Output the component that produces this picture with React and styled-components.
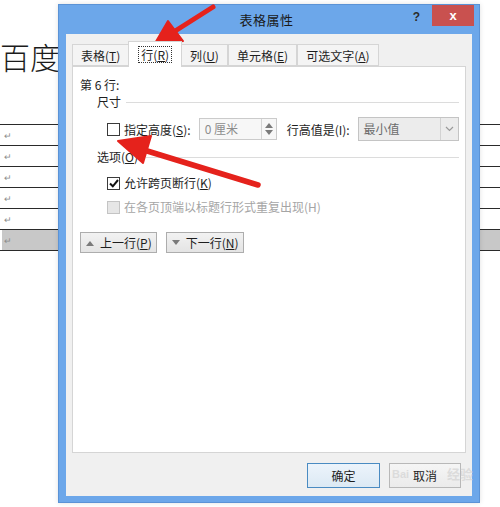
import React from 'react'
import styled, { createGlobalStyle } from 'styled-components'

const GlobalStyle = createGlobalStyle`
  html, body {
    margin: 0;
    padding: 0;
    background: #fff;
  }
  body {
    font-family: "Noto Sans CJK SC", "Noto Sans", sans-serif;
  }
`

const Page = styled.div`
  position: relative;
  width: 500px;
  height: 507px;
  overflow: hidden;
  background: #fff;
`

// document behind the dialog
const Doc = styled.div`
  padding-top: 41px;
`

const DocTitle = styled.div`
  font-family: "Noto Sans CJK SC", sans-serif;
  font-weight: 300;
  font-size: 30px;
  line-height: 31px;
  color: #1c1c1c;
`

const DocTable = styled.div`
  margin-top: 52px;
  border-top: 1px solid #2a2a2a;
`

const DocRow = styled.div`
  height: 20px;
  border-bottom: 1px solid #2a2a2a;
  display: flex;
  align-items: center;
  padding-left: 4px;
  background: ${p => (p.$selected ? 'linear-gradient(to right, transparent 2px, #c8c8c8 2px)' : 'transparent')};
`

const Mark = styled.span`
  font-size: 9px;
  color: #8c8c8c;
  line-height: 1;
`

// dialog window
const Dialog = styled.div`
  position: absolute;
  left: 58px;
  top: 4px;
  width: 422px;
  height: 499px;
  box-sizing: border-box;
  border: 1px solid #5b93d6;
  background: #6ca7ea;
  display: flex;
  flex-direction: column;
  box-shadow: 0 0 5px rgba(0, 0, 0, 0.12);
`

const TitleBar = styled.div`
  height: 29px;
  display: grid;
  grid-template-columns: 1fr auto 1fr;
  padding-right: 5px;
`

const Title = styled.div`
  font-size: 13px;
  color: #1a1a1a;
  align-self: center;
  letter-spacing: 0.5px;
`

const Controls = styled.div`
  display: flex;
  justify-content: flex-end;
  align-items: flex-start;
  gap: 12px;
`

const Help = styled.span`
  font-family: "Liberation Sans", sans-serif;
  font-weight: bold;
  font-size: 12px;
  color: #2b2b2b;
  margin-top: 5px;
`

const CloseButton = styled.div`
  width: 42px;
  height: 21px;
  background: #c9514f;
  color: #fff;
  display: flex;
  align-items: center;
  justify-content: center;
  font-family: "Liberation Sans", sans-serif;
  font-size: 13px;
  font-weight: bold;
`

const Frame = styled.div`
  flex: 1;
  display: flex;
  padding: 0 7px 6px;
  min-height: 0;
`

const Client = styled.div`
  flex: 1;
  background: #f0f0f0;
  display: flex;
  flex-direction: column;
  padding: 7px 6px 0 6px;
  font-size: 12px;
  color: #1e1e1e;
`

const TabRow = styled.div`
  display: flex;
  align-items: flex-end;
  height: 25px;
  position: relative;
  z-index: 1;
`

const Tab = styled.div`
  box-sizing: border-box;
  height: ${p => (p.$active ? '26px' : '22px')};
  margin: ${p => (p.$active ? '0 -1px -1px' : '0')};
  padding: ${p => (p.$active ? '0 9px' : '0 8px')};
  border: 1px solid #d5d5d5;
  border-bottom: ${p => (p.$active ? 'none' : '1px solid #d5d5d5')};
  background: ${p => (p.$active ? '#fff' : '#f4f4f4')};
  display: flex;
  align-items: center;
  white-space: nowrap;
  position: relative;
  z-index: ${p => (p.$active ? 2 : 0)};
  & + & {
    border-left: ${p => (p.$active ? '1px solid #d5d5d5' : 'none')};
  }
`

const Focus = styled.span`
  border: 1px dotted #333;
  padding: 0 2px;
  line-height: 15px;
`

const Panel = styled.div`
  flex: 1;
  background: #fff;
  border: 1px solid #d5d5d5;
  padding: 10px 6px 0 7px;
  display: flex;
  flex-direction: column;
`

const Line = styled.div`
  line-height: 16px;
  margin-top: ${p => p.$top || 0}px;
  padding-left: ${p => p.$indent || 0}px;
  display: flex;
  align-items: center;
  white-space: nowrap;
  color: ${p => (p.$disabled ? '#a5a5a5' : '#1e1e1e')};
`

const Group = styled.div`
  display: flex;
  align-items: center;
  line-height: 16px;
  margin-top: ${p => p.$top || 0}px;
  padding-left: 17px;
  &::after {
    content: '';
    flex: 1;
    height: 1px;
    background: #dcdcdc;
    margin-left: ${p => p.$gap || 5}px;
  }
`

const Box = styled.span`
  box-sizing: border-box;
  width: 13px;
  height: 13px;
  border: 1px solid ${p => (p.$disabled ? '#c4c4c4' : '#3a3a3a')};
  background: ${p => (p.$disabled ? '#e6e6e6' : '#fff')};
  display: inline-flex;
  align-items: center;
  justify-content: center;
  margin-right: 4px;
  flex-shrink: 0;
`

const SizeRow = styled.div`
  display: flex;
  align-items: center;
  margin-top: 7px;
  padding-left: 27px;
  height: 24px;
  white-space: nowrap;
`

const Spin = styled.div`
  box-sizing: border-box;
  width: 78px;
  height: 22px;
  margin-left: 8px;
  border: 1px solid #cbcbcb;
  background: #f7f7f7;
  display: flex;
`

const SpinValue = styled.span`
  flex: 1;
  padding-left: 5px;
  color: #8d8d8d;
  line-height: 20px;
`

const SpinArrows = styled.span`
  width: 14px;
  border-left: 1px solid #d4d4d4;
  display: flex;
  flex-direction: column;
  align-items: center;
  justify-content: space-around;
  padding: 2px 0;
`

const Label = styled.span`
  margin-left: ${p => p.$left || 0}px;
`

const Select = styled.div`
  box-sizing: border-box;
  width: 101px;
  height: 24px;
  margin-left: 8px;
  border: 1px solid #c4c4c4;
  background: #ececec;
  display: flex;
  color: #6b6b6b;
`

const SelectValue = styled.span`
  flex: 1;
  padding-left: 5px;
  line-height: 22px;
`

const SelectArrow = styled.span`
  width: 17px;
  border-left: 1px solid #d2d2d2;
  display: flex;
  align-items: center;
  justify-content: center;
`

const NavRow = styled.div`
  display: flex;
  gap: 9px;
  margin-top: 17px;
`

const NavButton = styled.div`
  box-sizing: border-box;
  height: 21px;
  padding: 0 4px 0 5px;
  border: 1px solid #adadad;
  background: linear-gradient(#f2f2f2, #e4e4e4);
  display: flex;
  align-items: center;
  gap: 6px;
  white-space: nowrap;
`

const Footer = styled.div`
  height: 43px;
  box-sizing: border-box;
  padding: 10px 5px 8px 0;
  display: flex;
  justify-content: flex-end;
  gap: 9px;
`

const Button = styled.div`
  box-sizing: border-box;
  width: ${p => (p.$primary ? 73 : 72)}px;
  height: 25px;
  border: 1px solid ${p => (p.$primary ? '#4a8bc2' : '#b8b8b8')};
  background: ${p => (p.$primary ? 'linear-gradient(#ecf4fb, #dce9f4)' : 'linear-gradient(#f5f5f5, #ebebeb)')};
  display: flex;
  align-items: center;
  justify-content: center;
  color: #1e1e1e;
`

const Watermark = styled.div`
  position: absolute;
  top: ${p => p.$top}px;
  left: ${p => p.$left}px;
  font-family: "Liberation Sans", "Noto Sans CJK SC", sans-serif;
  font-size: ${p => p.$size}px;
  font-weight: bold;
  color: rgba(205, 205, 205, 0.6);
  pointer-events: none;
  line-height: 1;
`

const Overlay = styled.svg`
  position: absolute;
  left: 0;
  top: 0;
  pointer-events: none;
`

const Tri = ({ up }) => (
  <svg width="8" height="6" viewBox="0 0 8 6">
    <path d={up ? 'M0 6 L4 1 L8 6 Z' : 'M0 0 L4 5 L8 0 Z'} fill="#7a7a7a" />
  </svg>
)

const Check = () => (
  <svg width="10" height="9" viewBox="0 0 10 9">
    <path d="M1 4.5 L3.8 7.3 L9 1" stroke="#111" strokeWidth="2" fill="none" />
  </svg>
)

const tabs = [
  { text: '表格', key: 'T' },
  { text: '行', key: 'R', active: true },
  { text: '列', key: 'U' },
  { text: '单元格', key: 'E' },
  { text: '可选文字', key: 'A' },
]

const App = () => {
  return (
    <Page>
      <GlobalStyle />
      <Doc>
        <DocTitle>百度</DocTitle>
        <DocTable>
          {[0, 1, 2, 3, 4, 5].map(i => (
            <DocRow key={i} $selected={i === 5}>
              <Mark>↵</Mark>
            </DocRow>
          ))}
        </DocTable>
      </Doc>

      <Dialog>
        <TitleBar>
          <span />
          <Title>表格属性</Title>
          <Controls>
            <Help>?</Help>
            <CloseButton>x</CloseButton>
          </Controls>
        </TitleBar>
        <Frame>
          <Client>
            <TabRow>
              {tabs.map(t => (
                <Tab key={t.key} $active={t.active}>
                  {t.active ? (
                    <Focus>{t.text}(<u>{t.key}</u>)</Focus>
                  ) : (
                    <span>{t.text}(<u>{t.key}</u>)</span>
                  )}
                </Tab>
              ))}
            </TabRow>
            <Panel>
              <Line>第 6 行:</Line>
              <Group $top={1} $gap={5}>尺寸</Group>
              <SizeRow>
                <Box />
                <span>指定高度(<u>S</u>):</span>
                <Spin>
                  <SpinValue>0 厘米</SpinValue>
                  <SpinArrows>
                    <Tri up />
                    <Tri />
                  </SpinArrows>
                </Spin>
                <Label $left={10}>行高值是(I):</Label>
                <Select>
                  <SelectValue>最小值</SelectValue>
                  <SelectArrow>
                    <svg width="9" height="6" viewBox="0 0 9 6">
                      <path d="M1 1 L4.5 4.5 L8 1" stroke="#9a9a9a" strokeWidth="1.2" fill="none" />
                    </svg>
                  </SelectArrow>
                </Select>
              </SizeRow>
              <Group $top={8} $gap={8}><span>选项(<u>O</u>)</span></Group>
              <Line $top={10} $indent={27}>
                <Box>
                  <Check />
                </Box>
                <span>允许跨页断行(<u>K</u>)</span>
              </Line>
              <Line $top={8} $indent={27} $disabled>
                <Box $disabled />
                <span>在各页顶端以标题行形式重复出现(H)</span>
              </Line>
              <NavRow>
                <NavButton>
                  <Tri up />
                  <span>上一行(<u>P</u>)</span>
                </NavButton>
                <NavButton>
                  <Tri />
                  <span>下一行(<u>N</u>)</span>
                </NavButton>
              </NavRow>
            </Panel>
            <Footer>
              <Button $primary>确定</Button>
              <Button>取消</Button>
            </Footer>
          </Client>
        </Frame>
      </Dialog>

      <Watermark $top={469} $left={392} $size={11}>Bai</Watermark>
      <Watermark $top={468} $left={447} $size={13}>经验</Watermark>

      <Overlay width="500" height="507" viewBox="0 0 500 507">
        <g fill="#e5221c" stroke="#e5221c" strokeLinecap="round" strokeLinejoin="round">
          <path d="M213 7 L172 33" strokeWidth="5" fill="none" />
          <path d="M154 45 L168 21 L183 41 Z" strokeWidth="2" />
          <path d="M258 185 L144 150" strokeWidth="5.5" fill="none" />
          <path d="M118 141 L151 136 L143 163 Z" strokeWidth="2" />
        </g>
      </Overlay>
    </Page>
  )
}

export default App
